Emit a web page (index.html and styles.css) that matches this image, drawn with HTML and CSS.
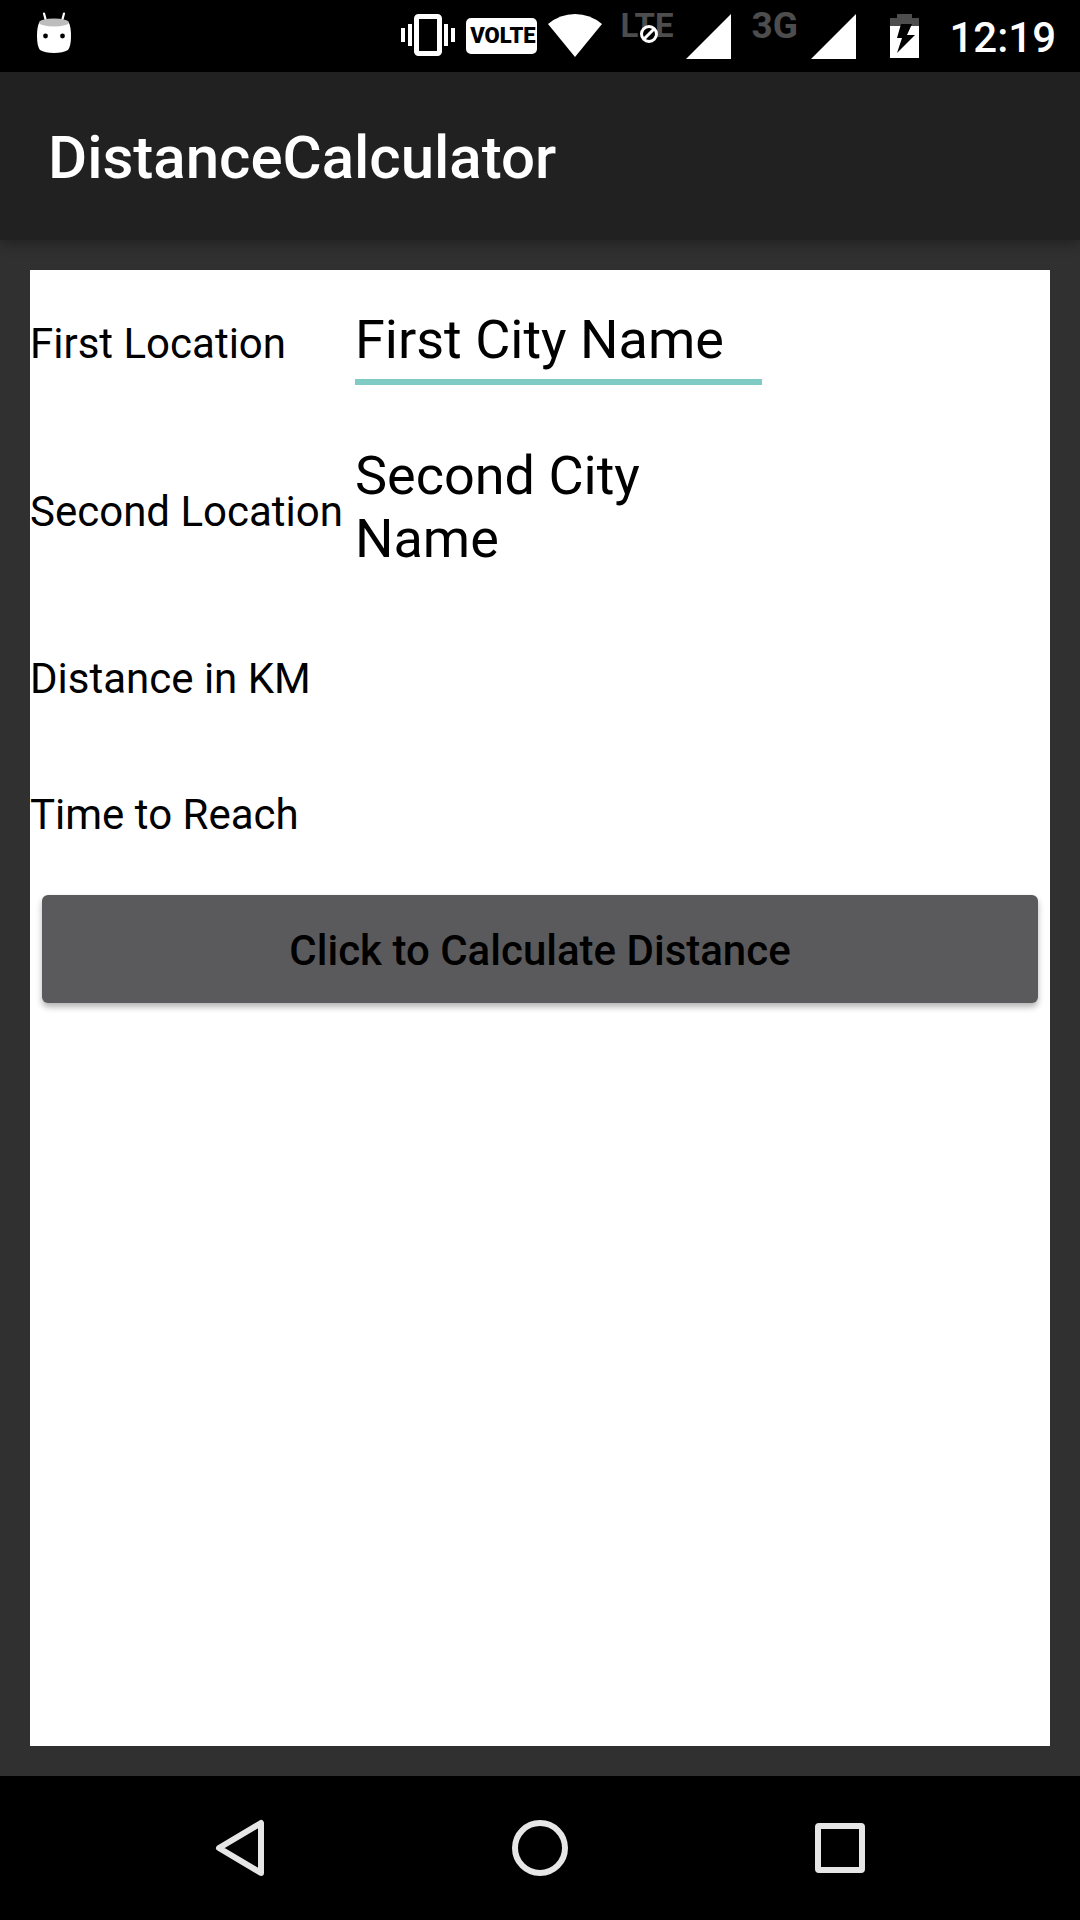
FILE: index.html
```html
<!DOCTYPE html>
<html lang="en">
<head>
<meta charset="utf-8">
<meta name="viewport" content="width=device-width, initial-scale=1">
<title>DistanceCalculator</title>
<link rel="stylesheet" href="styles.css">
</head>
<body>
<div class="status-bar">
  <svg class="notification" width="36" height="42" viewBox="0 0 36 42" aria-hidden="true">
    <path d="M8 1.500L10 9M28 1.500L26 9" stroke="#fff" stroke-width="2.200" stroke-linecap="round"/>
    <path d="M3 11Q1 15 1 24Q1 34 4 38Q9 41 18 41Q27 41 32 38Q35 34 35 24Q35 15 33 11Z" fill="#fff"/>
    <ellipse cx="18" cy="10.500" rx="15" ry="4" fill="#bdbdbd"/>
    <circle cx="9.500" cy="24" r="2.400"/>
    <circle cx="26.500" cy="24" r="2.400"/>
  </svg>
  <div class="indicators">
    <svg width="54" height="42" viewBox="0 0 54 42" aria-hidden="true">
      <path d="M0 14h4v14H0zM7 10h4v22H7zM43 10h4v22h-4zM50 14h4v14h-4z" fill="#fff"/>
      <rect x="15.500" y="2.500" width="23" height="37" rx="2" fill="none" stroke="#fff" stroke-width="5"/>
    </svg>
    <span class="volte">VOLTE</span>
    <svg class="wifi" width="54" height="43" viewBox="0 0 54 43" aria-hidden="true">
      <path d="M0 10Q12 0 27 0Q42 0 54 10L27 43Z" fill="#fff"/>
    </svg>
    <span class="network network-lte">LTE
      <svg class="blocked" width="20" height="20" viewBox="0 0 20 20" aria-hidden="true">
        <circle cx="10" cy="10" r="7.500" fill="#000" stroke="#fff" stroke-width="3"/>
        <path d="M5 15L15 5" stroke="#fff" stroke-width="3"/>
      </svg>
    </span>
    <svg class="signal" width="45" height="45" viewBox="0 0 45 45" aria-hidden="true"><path d="M45 0V45H0Z" fill="#fff"/></svg>
    <span class="network network-3g">3G</span>
    <svg class="signal" width="45" height="45" viewBox="0 0 45 45" aria-hidden="true"><path d="M45 0V45H0Z" fill="#fff"/></svg>
    <svg class="battery" width="29" height="44" viewBox="0 0 29 44" aria-hidden="true">
      <path d="M7 0H22V4H29V12H0V4H7Z" fill="#4d4d4d"/>
      <path d="M0 12H29V44H0Z" fill="#fff"/>
      <path d="M11 10H22L17 21H25L7 39L12 24H7Z"/>
    </svg>
    <time class="clock">12:19</time>
  </div>
</div>

<header class="app-bar"><h1 class="app-title">DistanceCalculator</h1></header>

<main class="content">
  <form class="panel">
    <div class="fields">
      <label class="label" for="first">First Location</label>
      <input class="field focused" id="first" type="text" value="First City Name">
      <label class="label" for="second">Second Location</label>
      <textarea class="field" id="second" rows="2">Second City Name</textarea>
      <label class="label" for="distance">Distance in KM</label>
      <output class="field" id="distance"></output>
      <label class="label" for="time">Time to Reach</label>
      <output class="field" id="time"></output>
    </div>
    <button class="calculate" type="button">Click to Calculate Distance</button>
  </form>
</main>

<nav class="nav-bar">
  <button class="nav-button" type="button" aria-label="Back">
    <svg width="60" height="60" viewBox="0 0 60 60"><path d="M51 5V55L9 30Z"/></svg>
  </button>
  <button class="nav-button" type="button" aria-label="Home">
    <svg width="60" height="60" viewBox="0 0 60 60"><circle cx="30" cy="30" r="25"/></svg>
  </button>
  <button class="nav-button" type="button" aria-label="Recent apps">
    <svg width="60" height="60" viewBox="0 0 60 60"><rect x="8" y="8" width="44" height="44" rx="1"/></svg>
  </button>
</nav>
</body>
</html>
```
FILE: styles.css
```css
* {
  box-sizing: border-box;
}

body {
  margin: 0;
  min-height: 100vh;
  display: flex;
  flex-direction: column;
  background: #303030;
  color: #000;
  font-family: Roboto, sans-serif;
  font-size: 42px;
}

.status-bar {
  height: 72px;
  padding: 0 24px 0 36px;
  display: flex;
  justify-content: space-between;
  background: #000;
  color: #fff;
}

.status-bar svg {
  display: block;
  flex: none;
}

.notification {
  margin-top: 12px;
}

.indicators {
  display: flex;
  align-items: flex-start;
  padding-top: 14px;
}

.volte {
  width: 71px;
  height: 36px;
  margin: 4px 11px 0;
  padding-left: 2px;
  border-radius: 5px;
  background: #fff;
  color: #000;
  font-size: 22px;
  font-weight: 900;
  line-height: 36px;
  text-align: center;
}

.network {
  position: relative;
  color: #4d4d4d;
  font-weight: 700;
  line-height: 24px;
}

.network-lte {
  width: 54px;
  margin: 0 12px 0 18px;
  font-size: 33px;
}

.network-3g {
  width: 48px;
  margin: 0 12px 0 20px;
  font-size: 37px;
}

.blocked {
  position: absolute;
  left: 19px;
  top: 10px;
}

.battery {
  margin-left: 34px;
}

.clock {
  margin-left: 30px;
  font-weight: 500;
  line-height: 48px;
}

.app-bar {
  height: 168px;
  padding: 4px 48px 0;
  display: flex;
  align-items: center;
  background: #212121;
  box-shadow: 0 4px 12px rgba(0, 0, 0, 0.3);
}

.app-title {
  margin: 0;
  color: #fff;
  font-size: 60px;
  font-weight: 500;
  line-height: 72px;
}

.content {
  flex: 1;
  display: flex;
  padding: 30px;
}

.panel {
  flex: 1;
  background: #fff;
}

.fields {
  display: grid;
  grid-template-columns: max-content minmax(0, 407px);
  column-gap: 12px;
}

.label {
  align-self: center;
  padding-top: 12px;
  line-height: 50px;
}

.field {
  display: block;
  width: 100%;
  min-height: 77px;
  margin: 38px 0 21px;
  padding: 0 0 8px;
  border: 0;
  border-bottom: 6px solid transparent;
  outline: 0;
  background: none;
  color: #000;
  font: 400 54px/63px Roboto, sans-serif;
  resize: none;
  overflow: hidden;
}

.focused {
  border-bottom-color: #80cbc4;
}

.calculate {
  display: block;
  width: calc(100% - 24px);
  height: 108px;
  margin: 18px 12px;
  padding: 4px 24px 0;
  border: 0;
  border-radius: 6px;
  background: #5a5a5c;
  color: #000;
  font: 500 42px/50px Roboto, sans-serif;
  box-shadow: 0 4px 6px rgba(0, 0, 0, 0.3);
}

.nav-bar {
  height: 144px;
  padding: 0 90px;
  display: flex;
  background: #000;
}

.nav-button {
  flex: 1;
  display: flex;
  align-items: center;
  justify-content: center;
  padding: 0;
  border: 0;
  background: none;
}

.nav-button svg {
  fill: none;
  stroke: #e6e6e6;
  stroke-width: 6;
  stroke-linejoin: round;
}
```
